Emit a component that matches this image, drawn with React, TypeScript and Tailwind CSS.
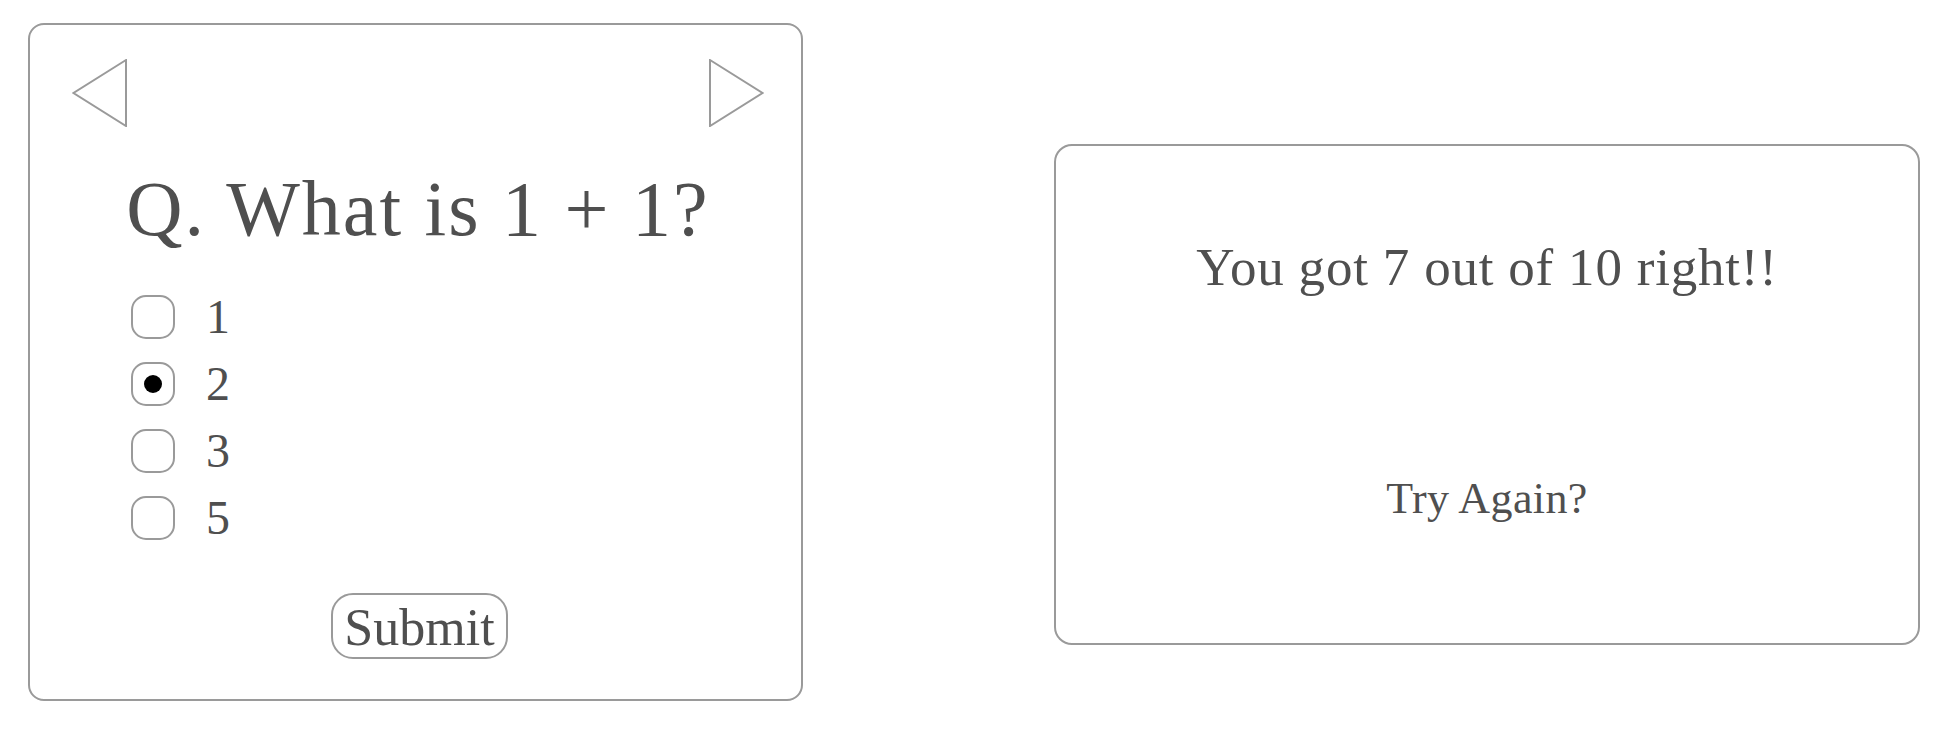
import React from "react";

const serif = { fontFamily: '"Liberation Serif", "Times New Roman", serif' };

function Triangle({ dir }: { dir: "left" | "right" }) {
  const pts = dir === "left" ? "54,1 1.5,34 54,67" : "1,1 53.5,34 1,67";
  return (
    <svg width="55" height="68" viewBox="0 0 55 68" className="block">
      <polygon points={pts} fill="none" stroke="#9a9a9a" strokeWidth="2" />
    </svg>
  );
}

function Option({ label, checked }: { label: string; checked?: boolean }) {
  return (
    <div className="flex h-[44px] items-center">
      <div className="flex h-[44px] w-[44px] items-center justify-center rounded-[15px] border-2 border-[#9a9a9a] bg-white">
        {checked && <div className="h-[18px] w-[18px] rounded-full bg-black" />}
      </div>
      <span className="ml-[31px] text-[48px] leading-[44px] text-[#4f4f4f]">{label}</span>
    </div>
  );
}

export default function App() {
  return (
    <div className="min-h-[730px] w-[1958px] bg-white" style={serif}>
      <div className="flex items-start pl-[28px] pt-[23px]">
        <div className="flex h-[678px] w-[775px] flex-col rounded-[16px] border-2 border-[#9a9a9a] pt-[34px]">
          <div className="flex justify-between pl-[42px] pr-[37px]">
            <Triangle dir="left" />
            <Triangle dir="right" />
          </div>
          <h1 className="mt-[43px] pl-[5px] text-center text-[78px] font-normal leading-none tracking-[2px] text-[#4f4f4f]">
            Q. What is 1 + 1?
          </h1>
          <div className="mt-[47px] flex flex-col gap-[23px] pl-[101px]">
            <Option label="1" />
            <Option label="2" checked />
            <Option label="3" />
            <Option label="5" />
          </div>
          <div className="mt-[53px] flex justify-center pl-[8px]">
            <button className="flex h-[66px] items-center rounded-[22px] border-2 border-[#9a9a9a] bg-white px-[11px] pt-[3px] text-[52px] leading-none text-[#4f4f4f]">
              Submit
            </button>
          </div>
        </div>
        <div className="ml-[251px] mt-[121px] flex h-[501px] w-[866px] flex-col items-center rounded-[18px] border-2 border-[#9a9a9a] pt-[95px]">
          <div className="text-[53px] leading-none tracking-[0.8px] text-[#4f4f4f]">You got 7 out of 10 right!!</div>
          <div className="mt-[183px] text-[44px] leading-none tracking-[0.4px] text-[#4f4f4f]">Try Again?</div>
        </div>
      </div>
    </div>
  );
}
